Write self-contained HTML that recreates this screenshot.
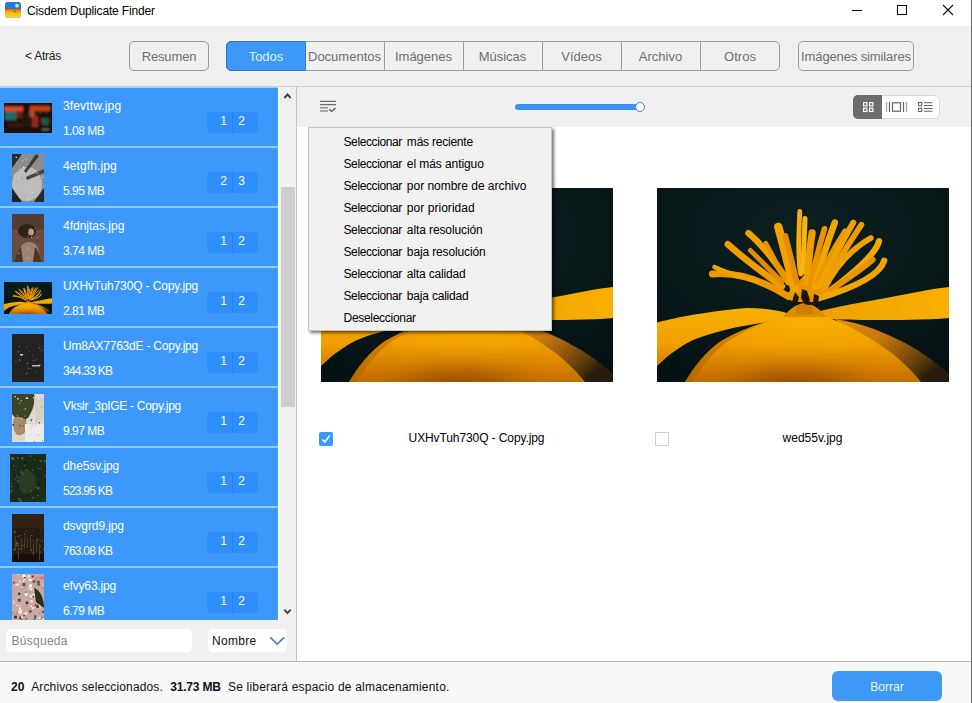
<!DOCTYPE html>
<html lang="es">
<head>
<meta charset="utf-8">
<title>Cisdem Duplicate Finder</title>
<style>
*{box-sizing:border-box;margin:0;padding:0}
html,body{width:972px;height:703px;overflow:hidden;background:#fff}
body{font-family:"Liberation Sans",Arial,sans-serif;font-size:12px;color:#000;position:relative}
.abs{position:absolute}
#titlebar{left:0;top:0;width:972px;height:26px;background:#fff}
#title{left:27px;top:3px;letter-spacing:-.15px;font-size:12px;line-height:16px;color:#000;white-space:nowrap}
#topbar{left:0;top:26px;width:972px;height:61px;background:#f0f0f0;border-bottom:1px solid #cfcfcf}
.btn{position:absolute;top:41px;height:30px;border:1px solid #9a9a9a;border-radius:5px;color:#6e6e6e;font-size:13px;line-height:30px;text-align:center;white-space:nowrap}
#tabs{left:226px;top:41px;width:554px;height:30px;border:1px solid #9a9a9a;border-radius:5px}
.tab{position:absolute;top:-1px;height:30px;width:80px;border:1px solid #9a9a9a;border-left:none;color:#6e6e6e;font-size:13px;line-height:30px;text-align:center;white-space:nowrap}
.tab.sel{background:#3d98f6;color:#dcf6ff;border:1px solid #2c76c6;border-radius:5px 0 0 5px}
#left{left:0;top:87px;width:278px;height:533px;background:#3c99fb;border-top:1px solid #a6d2fa;overflow:hidden}
.item{position:absolute;left:0;width:278px;height:60px;border-bottom:2px solid #8fcbff}
.item .nm{position:absolute;left:63px;top:10px;color:#fff;font-size:12px;line-height:16px;white-space:nowrap}
.item .sz{position:absolute;left:63px;top:35px;color:#fff;font-size:12px;line-height:16px;white-space:nowrap}
.badge{position:absolute;left:207px;top:23.5px;width:51px;height:21px;background:#2e8ffa;border-radius:4px;color:#fff;font-size:12px;line-height:19.5px}
.badge:before{content:"";position:absolute;left:25px;top:0;width:1px;height:21px;background:#2483ee}
.badge span{position:absolute;top:0;width:17px;text-align:center}
.th{position:absolute;overflow:hidden}
#scroll{left:278px;top:87px;width:18px;height:533px;background:#f0f0f0;border-left:2px solid #fbfbfb}
#thumb{left:281px;top:187px;width:14px;height:220px;background:#cdcdcd}
#vline{left:296px;top:87px;width:1px;height:574px;background:#c6c6c6}
#leftbottom{left:0;top:620px;width:296px;height:41px;background:#f0f0f0}
#search{left:6px;top:629px;width:186px;height:23px;background:#fff;border-radius:5px;color:#858585;font-size:12px;letter-spacing:.27px;line-height:25px;padding-left:5.5px}
#sort{left:208px;top:629px;width:79px;height:23px;background:#fff;border-radius:5px;color:#111;font-size:12px;letter-spacing:.3px;line-height:25px;padding-left:4px}
#rtool{left:297px;top:87px;width:675px;height:40px;background:#f0f0f0}
#content{left:299px;top:127px;width:673px;height:534px;background:#fff}
#footer{left:0;top:661px;width:972px;height:42px;background:#f8f8f8;border-top:1px solid #b9b9b9}
#ftxt{left:11px;top:679px;font-size:12px;line-height:16px;white-space:nowrap;color:#111}
#ftxt span,#ftxt b{position:absolute;top:0;left:0}
#ftxt span{letter-spacing:.13px}
#borrar{left:832px;top:671px;width:110px;height:30px;background:#3d98f6;border-radius:6px;color:#e4f8ff;font-size:12px;line-height:32px;text-align:center}
#menu{left:308px;top:127px;width:244px;height:204px;background:#f1f1f1;border:1px solid #c4c4c4;box-shadow:2px 2px 3px rgba(0,0,0,.55)}
#menu div{position:absolute;left:34.5px;word-spacing:1.6px;font-size:12px;line-height:16px;white-space:nowrap;color:#000}
#menu .sel{letter-spacing:-.39px}
#menu span{word-spacing:0}
.lbl{position:absolute;top:430px;font-size:12px;line-height:16px;text-align:center;white-space:nowrap}
#redge{left:971px;top:0;width:1px;height:703px;background:#6a6a6a}
</style>
</head>
<body>
<svg width="0" height="0" style="position:absolute"><defs>
<radialGradient id="fbg" cx=".5" cy=".25" r=".8"><stop offset="0" stop-color="#0b2020"/><stop offset="1" stop-color="#051214"/></radialGradient>
<radialGradient id="fdome" cx=".5" cy=".12" r=".95" fx=".5" fy=".05"><stop offset="0" stop-color="#f8b200"/><stop offset=".45" stop-color="#f2a000"/><stop offset=".8" stop-color="#dc8400"/><stop offset="1" stop-color="#c87200"/></radialGradient>
<radialGradient id="fshade" cx=".45" cy="1.05" r=".62"><stop offset="0" stop-color="#8a4400" stop-opacity=".9"/><stop offset=".35" stop-color="#a05400" stop-opacity=".6"/><stop offset=".7" stop-color="#b86800" stop-opacity=".22"/><stop offset="1" stop-color="#c07000" stop-opacity="0"/></radialGradient>
<linearGradient id="fleft" x1="0" y1="0" x2="0" y2="1"><stop offset="0" stop-color="#f8b000"/><stop offset=".6" stop-color="#f0a000"/><stop offset="1" stop-color="#d88000"/></linearGradient>
<linearGradient id="fright" x1="0" y1="0" x2="1" y2="0"><stop offset="0" stop-color="#f0a000"/><stop offset="1" stop-color="#f8b000"/></linearGradient>
<linearGradient id="funder" x1="0" y1="0" x2="1" y2=".6"><stop offset="0" stop-color="#e89000"/><stop offset=".45" stop-color="#c07410"/><stop offset=".8" stop-color="#6a4410"/><stop offset="1" stop-color="#2a1c0c"/></linearGradient>
<linearGradient id="funderl" x1="1" y1="0" x2="0" y2="1"><stop offset="0" stop-color="#e89400"/><stop offset="1" stop-color="#b86800"/></linearGradient>
<filter id="fb1" x="-5%" y="-5%" width="110%" height="110%"><feGaussianBlur stdDeviation=".6"/></filter>
<symbol id="flower" viewBox="0 0 292 194" preserveAspectRatio="none">
<rect width="292" height="194" fill="url(#fbg)"/>
<g filter="url(#fb1)">
<path d="M178 131C215 136 262 158 292 186V194H250Z" fill="url(#funder)"/>
<path d="M0 134.6C20 129 54 123 90 120C105 120 120 122 130 125L130 132C100 134 60 142 36 152C20 160 8 170 0 178Z" fill="url(#fleft)"/>
<path d="M28 194C36 180 48 164 64 153C84 141 108 133 128 129L135 135L60 194Z" fill="url(#funderl)"/>
<path d="M160 124C180 118 215 113 255 105C270 102 282 100 292 99V130C270 132 240 132 210 132C195 132 175 131 160 131Z" fill="url(#fright)"/>
<path d="M36 194C44 180 56 164 70 154C90 141 112 131 130 128C140 125 155 125 165 128C185 133 212 148 236 166C248 176 258 186 264 194Z" fill="url(#fdome)"/>
<path d="M36 194C44 180 56 164 70 154C90 141 112 131 130 128C140 125 155 125 165 128C185 133 212 148 236 166C248 176 258 186 264 194Z" fill="url(#fshade)"/>
<path d="M126 129C132 122 138 116 148 115C157 116 163 122 170 129Z" fill="#e08c00"/><path d="M128 108L150 84L168 106L160 114L136 114Z" fill="#e89400"/>
<g fill="none" stroke-linecap="round"><path d="M131.5 108.7Q90.6 82.7 55.3 86" stroke="#ee9600" stroke-width="6.9"/><path d="M100 93Q71.3 86.0 57.4 79" stroke="#f2a200" stroke-width="4.5"/><path d="M125 98.4Q90.9 74.3 70.8 56.2" stroke="#f09c00" stroke-width="6.6"/><path d="M125 94Q106.8 75.8 93.4 62.4" stroke="#e48c00" stroke-width="4.8"/><path d="M131.5 94.3Q110.5 61.3 91.4 45" stroke="#f2a000" stroke-width="6.3"/><path d="M127 90Q118.1 71.4 108.8 55.2" stroke="#e89200" stroke-width="4.5"/><path d="M137.7 102.5Q129.4 68.6 121.2 38.7" stroke="#f4a200" stroke-width="8.4"/><path d="M139.7 94.3Q133.9 68.8 128.4 48" stroke="#e68e00" stroke-width="5.7"/><path d="M143.8 86Q140.3 72.2 142.8 23.3" stroke="#f6ae10" stroke-width="4.8"/><path d="M145.9 84Q147.1 54.8 148 30.5" stroke="#f8b418" stroke-width="5.1"/><path d="M150 94.3Q151.4 70.4 155.1 44.9" stroke="#f09e00" stroke-width="7.2"/><path d="M154 94Q159.2 68.6 167.5 40.8" stroke="#ea9400" stroke-width="5.7"/><path d="M158 98Q166.1 65.7 177.8 34.6" stroke="#f4a600" stroke-width="6.6"/><path d="M160 94Q172.0 67.5 188 42.9" stroke="#ec9800" stroke-width="5.1"/><path d="M162.3 98.4Q178.7 65.5 196.3 34.6" stroke="#f2a200" stroke-width="6.0"/><path d="M166.5 98.4Q184.5 66.4 204.5 36.7" stroke="#ee9c00" stroke-width="5.7"/><path d="M166.5 102.5Q183.8 67.2 213.8 50" stroke="#f0a000" stroke-width="5.7"/><path d="M170.6 104.6Q218.9 68.5 222 53.2" stroke="#f4a800" stroke-width="6.3"/><path d="M166.5 106.7Q203.5 82.8 215.8 71.7" stroke="#e89400" stroke-width="5.7"/><path d="M160.3 110.8Q221.4 92.7 227.2 72.7" stroke="#f2a400" stroke-width="6.3"/></g>
<path d="M138 104l4 5l-2 8l-5 -3zM145 101l5 2l3 9l-5 5l-4 -7zM157 106l5 2l-1 9l-5 -2zM150 112l4 2l-1 5l-4 -1z" fill="#1c1408"/>
<path d="M140 118c3 -2 11 -2 15 0l2 8h-19z" fill="#d07e00"/>
</g>
</symbol></defs></svg><svg width="0" height="0" style="position:absolute"><defs><filter id="tb" x="0" y="0" width="100%" height="100%"><feGaussianBlur stdDeviation=".6"/></filter><filter id="tb2" x="0" y="0" width="100%" height="100%"><feGaussianBlur stdDeviation="1.1"/></filter></defs></svg>
<div id="titlebar" class="abs"></div>
<div id="title" class="abs">Cisdem Duplicate Finder</div>
<div id="topbar" class="abs"></div>
<div id="back" class="abs" style="left:25px;top:48px;font-size:12px;line-height:16px;color:#222;letter-spacing:-.25px">&lt; Atrás</div>
<div class="btn" style="left:129px;width:80px;letter-spacing:-.15px">Resumen</div>
<div id="tabs" class="abs">
<div class="tab sel" style="left:-1px">Todos</div>
<div class="tab" style="left:78px">Documentos</div>
<div class="tab" style="left:157px">Imágenes</div>
<div class="tab" style="left:236px">Músicas</div>
<div class="tab" style="left:315px">Vídeos</div>
<div class="tab" style="left:394px">Archivo</div>
<div class="tab" style="left:473px;border-right:none;border-top:none;border-bottom:none;top:0;height:28px;line-height:30px">Otros</div>
</div>
<div class="btn" style="left:798px;width:116px;letter-spacing:-.12px">Imágenes similares</div>

<div id="left" class="abs">
<div class="item" style="top:0px"><div class="th" style="left:4px;top:15px;width:48px;height:30px"><svg width="48" height="30" viewBox="0 0 48 30" style="display:block;background:#1a0d0a"><g filter="url(#tb2)"><rect width="48" height="30" fill="#1a0d0a"/><rect x="0" y="3.5" width="19" height="5" fill="#d8502a"/><rect x="26" y="3" width="20" height="5" fill="#c8401e"/><rect x="1" y="9" width="11" height="8" fill="#1c6e66"/><rect x="12" y="9" width="7" height="6" fill="#6a2216"/><rect x="28" y="13" width="6" height="11" fill="#9a281c"/><rect x="25" y="8" width="5" height="6" fill="#b84a30"/><rect x="38" y="15" width="7" height="7" fill="#24553a"/><rect x="4" y="20" width="14" height="4" fill="#3a1610"/><rect x="18" y="10" width="8" height="14" fill="#22120c"/><rect x="38" y="26" width="7" height="1" fill="#7a8a5a"/><rect x="31.1" y="10.4" width="0.8" height="0.8" fill="#f0a070"/><rect x="42.1" y="9.5" width="0.8" height="0.8" fill="#f0a070"/><rect x="24.8" y="14.9" width="0.5" height="0.5" fill="#f0a070"/><rect x="36.1" y="8.9" width="0.8" height="0.8" fill="#f0a070"/><rect x="37.9" y="17.3" width="0.5" height="0.5" fill="#e8d0a0"/><rect x="25.1" y="11.5" width="0.8" height="0.8" fill="#f0a070"/><rect x="30.4" y="10.3" width="0.6" height="0.6" fill="#e8d0a0"/><rect x="36.3" y="18.9" width="0.6" height="0.6" fill="#f0a070"/><rect x="32.2" y="16.8" width="0.5" height="0.5" fill="#f0a070"/><rect x="37.6" y="15.9" width="0.8" height="0.8" fill="#e8d0a0"/></g></svg></div><div class="nm" style="letter-spacing:0.14px">3fevttw.jpg</div><div class="sz" style="letter-spacing:-0.5px">1.08 MB</div><div class="badge"><span style="left:8px">1</span><span style="left:26px">2</span></div></div>
<div class="item" style="top:60px"><div class="th" style="left:12px;top:6px;width:32px;height:48px"><svg width="32" height="48" viewBox="0 0 32 48" style="display:block;background:#8c8c8a"><g filter="url(#tb)"><rect width="32" height="48" fill="#8c8c8a"/><ellipse cx="15" cy="30" rx="15" ry="17" fill="#bcbcba"/><path d="M0 0h10L0 14z" fill="#2c2c2c"/><path d="M0 34L10 48H0z" fill="#242424"/><path d="M32 34L22 48h10z" fill="#2a2a2a"/><path d="M24 0L12 17l2 2L27 2z" fill="#3a3a3a"/><path d="M32 15L14 23l1 3l17 -7z" fill="#444"/><rect x="14.9" y="44.3" width="0.9" height="0.9" fill="#eee"/><rect x="25.4" y="33.6" width="0.8" height="0.8" fill="#bbb"/><rect x="9.6" y="23.8" width="0.9" height="0.9" fill="#777"/><rect x="9.2" y="47.0" width="0.7" height="0.7" fill="#777"/><rect x="5.3" y="16.4" width="1.3" height="1.3" fill="#777"/><rect x="1.3" y="32.1" width="1.2" height="1.2" fill="#bbb"/><rect x="25.3" y="39.3" width="0.9" height="0.9" fill="#777"/><rect x="19.0" y="27.8" width="1.0" height="1.0" fill="#eee"/><rect x="30.2" y="22.8" width="1.1" height="1.1" fill="#eee"/><rect x="23.4" y="14.9" width="1.1" height="1.1" fill="#bbb"/><rect x="26.3" y="13.7" width="0.9" height="0.9" fill="#bbb"/><rect x="11.1" y="45.2" width="0.9" height="0.9" fill="#bbb"/><rect x="3.7" y="2.8" width="1.2" height="1.2" fill="#eee"/><rect x="23.6" y="19.1" width="1.3" height="1.3" fill="#777"/><rect x="2.6" y="21.6" width="1.0" height="1.0" fill="#eee"/><rect x="26.2" y="41.5" width="0.8" height="0.8" fill="#777"/><rect x="31.6" y="32.8" width="0.9" height="0.9" fill="#eee"/><rect x="4.8" y="8.5" width="0.8" height="0.8" fill="#eee"/><rect x="0.4" y="39.9" width="0.7" height="0.7" fill="#777"/><rect x="0.1" y="20.1" width="0.9" height="0.9" fill="#bbb"/><rect x="10.2" y="6.0" width="1.3" height="1.3" fill="#bbb"/><rect x="21.0" y="35.5" width="1.0" height="1.0" fill="#bbb"/><rect x="25.5" y="18.8" width="0.9" height="0.9" fill="#eee"/><rect x="15.4" y="19.2" width="0.8" height="0.8" fill="#eee"/><rect x="14.1" y="5.3" width="1.1" height="1.1" fill="#eee"/><rect x="0.0" y="7.3" width="0.7" height="0.7" fill="#777"/><rect x="19.6" y="3.4" width="0.8" height="0.8" fill="#777"/><rect x="4.8" y="12.1" width="0.9" height="0.9" fill="#777"/><rect x="15.2" y="5.5" width="1.0" height="1.0" fill="#777"/><rect x="15.4" y="15.0" width="0.7" height="0.7" fill="#bbb"/><rect x="11.0" y="12.7" width="1.3" height="1.3" fill="#eee"/><rect x="16.5" y="9.9" width="1.4" height="1.4" fill="#777"/><rect x="4.7" y="26.1" width="0.6" height="0.6" fill="#bbb"/><rect x="9.5" y="30.9" width="0.7" height="0.7" fill="#777"/><rect x="16.6" y="43.6" width="0.9" height="0.9" fill="#eee"/><rect x="17.0" y="37.4" width="0.9" height="0.9" fill="#eee"/><rect x="19.6" y="37.8" width="1.2" height="1.2" fill="#eee"/><rect x="25.8" y="39.3" width="1.2" height="1.2" fill="#eee"/><rect x="6.4" y="23.7" width="1.2" height="1.2" fill="#eee"/><rect x="25.3" y="22.7" width="0.8" height="0.8" fill="#bbb"/></g></svg></div><div class="nm" style="letter-spacing:0.1px">4etgfh.jpg</div><div class="sz" style="letter-spacing:-0.5px">5.95 MB</div><div class="badge"><span style="left:8px">2</span><span style="left:26px">3</span></div></div>
<div class="item" style="top:120px"><div class="th" style="left:12px;top:6px;width:32px;height:48px"><svg width="32" height="48" viewBox="0 0 32 48" style="display:block;background:#6a4c3c"><g filter="url(#tb)"><rect width="32" height="48" fill="#6a4c3c"/><rect width="32" height="16" fill="#553c30"/><ellipse cx="15" cy="17" rx="9" ry="7" fill="#2e2019"/><ellipse cx="19" cy="18" rx="3" ry="3.5" fill="#b89a88"/><path d="M6 48c0 -14 4 -20 11 -20s11 6 11 20z" fill="#9c8272"/><path d="M3 48c1 -8 3 -12 6 -15l2 15zM29 48c-1 -8 -3 -12 -6 -15l-2 15z" fill="#4a3429"/><rect x="25.1" y="26.1" width="1.3" height="1.3" fill="#3a2a22"/><rect x="25.1" y="23.1" width="0.8" height="0.8" fill="#d8c4b8"/><rect x="15.4" y="22.2" width="0.9" height="0.9" fill="#d8c4b8"/><rect x="15.6" y="33.5" width="1.2" height="1.2" fill="#d8c4b8"/><rect x="22.7" y="14.3" width="0.9" height="0.9" fill="#d8c4b8"/><rect x="15.6" y="16.4" width="1.2" height="1.2" fill="#3a2a22"/><rect x="7.7" y="44.1" width="1.1" height="1.1" fill="#3a2a22"/><rect x="14.0" y="44.1" width="1.1" height="1.1" fill="#d8c4b8"/><rect x="25.9" y="11.0" width="1.0" height="1.0" fill="#3a2a22"/><rect x="22.1" y="15.3" width="1.2" height="1.2" fill="#3a2a22"/><rect x="19.1" y="22.6" width="1.0" height="1.0" fill="#d8c4b8"/><rect x="6.4" y="38.8" width="1.1" height="1.1" fill="#d8c4b8"/><rect x="16.5" y="43.6" width="0.9" height="0.9" fill="#d8c4b8"/><rect x="22.5" y="17.6" width="0.8" height="0.8" fill="#3a2a22"/></g></svg></div><div class="nm" style="letter-spacing:0px">4fdnjtas.jpg</div><div class="sz" style="letter-spacing:-0.5px">3.74 MB</div><div class="badge"><span style="left:8px">1</span><span style="left:26px">2</span></div></div>
<div class="item" style="top:180px"><div class="th" style="left:4px;top:14px;width:48px;height:32px"><svg width="48" height="32" style="display:block"><use href="#flower" width="48" height="32"/></svg></div><div class="nm" style="letter-spacing:-0.14px">UXHvTuh730Q - Copy.jpg</div><div class="sz" style="letter-spacing:-0.5px">2.81 MB</div><div class="badge"><span style="left:8px">1</span><span style="left:26px">2</span></div></div>
<div class="item" style="top:240px"><div class="th" style="left:12px;top:6px;width:32px;height:48px"><svg width="32" height="48" viewBox="0 0 32 48" style="display:block;background:#202324"><g filter="url(#tb)"><rect width="32" height="48" fill="#202324"/><rect x="16.5" y="34.0" width="0.8" height="0.8" fill="#c8cac8"/><rect x="14.3" y="12.5" width="1.2" height="1.2" fill="#5a5d5c"/><rect x="27.2" y="30.5" width="1.2" height="1.2" fill="#c8cac8"/><rect x="14.4" y="39.2" width="0.9" height="0.9" fill="#c8cac8"/><rect x="7.1" y="25.4" width="1.2" height="1.2" fill="#8a8d8c"/><rect x="19.4" y="34.4" width="0.6" height="0.6" fill="#8a8d8c"/><rect x="15.8" y="32.7" width="0.9" height="0.9" fill="#5a5d5c"/><rect x="21.4" y="26.0" width="0.9" height="0.9" fill="#8a8d8c"/><rect x="26.8" y="9.9" width="0.7" height="0.7" fill="#8a8d8c"/><rect x="23.9" y="25.3" width="0.9" height="0.9" fill="#8a8d8c"/><rect x="15.0" y="28.8" width="0.9" height="0.9" fill="#c8cac8"/><rect x="8.4" y="17.4" width="0.9" height="0.9" fill="#5a5d5c"/><rect x="16.7" y="16.4" width="0.9" height="0.9" fill="#5a5d5c"/><rect x="27.9" y="38.4" width="0.7" height="0.7" fill="#5a5d5c"/><rect x="6.7" y="12.1" width="0.9" height="0.9" fill="#8a8d8c"/><rect x="21.1" y="22.6" width="0.7" height="0.7" fill="#5a5d5c"/><rect x="24.2" y="38.5" width="0.6" height="0.6" fill="#c8cac8"/><rect x="20.4" y="20.5" width="0.7" height="0.7" fill="#8a8d8c"/><rect x="29.1" y="15.5" width="1.3" height="1.3" fill="#5a5d5c"/><rect x="26.9" y="13.5" width="1.0" height="1.0" fill="#8a8d8c"/><rect x="7.4" y="22.7" width="0.9" height="0.9" fill="#5a5d5c"/><rect x="14.4" y="20.1" width="0.6" height="0.6" fill="#5a5d5c"/><rect x="3.5" y="26.8" width="0.9" height="0.9" fill="#8a8d8c"/><rect x="13.4" y="25.6" width="0.7" height="0.7" fill="#8a8d8c"/><rect x="6.0" y="39.2" width="0.7" height="0.7" fill="#8a8d8c"/><rect x="5.3" y="17.2" width="1.2" height="1.2" fill="#8a8d8c"/><rect x="20" y="31" width="8" height="1.5" fill="#b8bab8"/><rect x="8" y="20" width="3" height="1.5" fill="#d0d2d0"/></g></svg></div><div class="nm" style="letter-spacing:-0.22px">Um8AX7763dE - Copy.jpg</div><div class="sz" style="letter-spacing:-0.77px">344.33 KB</div><div class="badge"><span style="left:8px">1</span><span style="left:26px">2</span></div></div>
<div class="item" style="top:300px"><div class="th" style="left:12px;top:6px;width:32px;height:48px"><svg width="32" height="48" viewBox="0 0 32 48" style="display:block;background:#dcd8cc"><g filter="url(#tb)"><rect width="32" height="48" fill="#dcd8cc"/><path d="M0 0h22c2 8 -2 18 -6 24c-6 4 -12 2 -16 -4z" fill="#3a4428"/><path d="M2 24c6 -3 12 0 13 8c0 6 -4 10 -10 9c-4 -4 -5 -12 -3 -17z" fill="#a98a6a"/><path d="M13 30h19v18H13z" fill="#ecebea"/><path d="M22 4h10v22H24z" fill="#d6d0c0"/><rect x="8.7" y="6.2" width="1.0" height="1.0" fill="#fff"/><rect x="13.0" y="25.8" width="1.1" height="1.1" fill="#23301a"/><rect x="22.4" y="4.3" width="0.7" height="0.7" fill="#56633a"/><rect x="13.6" y="3.5" width="1.5" height="1.5" fill="#e8e6da"/><rect x="25.7" y="4.0" width="1.5" height="1.5" fill="#e8e6da"/><rect x="8.5" y="5.8" width="0.6" height="0.6" fill="#23301a"/><rect x="29.7" y="12.9" width="0.7" height="0.7" fill="#56633a"/><rect x="30.0" y="46.5" width="0.9" height="0.9" fill="#56633a"/><rect x="6.5" y="15.0" width="0.9" height="0.9" fill="#56633a"/><rect x="9.3" y="24.0" width="0.8" height="0.8" fill="#fff"/><rect x="25.7" y="47.7" width="0.6" height="0.6" fill="#e8e6da"/><rect x="23.5" y="26.5" width="0.8" height="0.8" fill="#23301a"/><rect x="7.9" y="21.5" width="1.3" height="1.3" fill="#23301a"/><rect x="21.0" y="26.2" width="1.5" height="1.5" fill="#fff"/><rect x="22.0" y="47.2" width="0.9" height="0.9" fill="#56633a"/><rect x="13.0" y="16.7" width="0.7" height="0.7" fill="#56633a"/><rect x="0.5" y="30.0" width="1.5" height="1.5" fill="#23301a"/><rect x="5.2" y="4.1" width="1.4" height="1.4" fill="#fff"/><rect x="19.2" y="33.2" width="0.6" height="0.6" fill="#56633a"/><rect x="5.0" y="21.4" width="0.9" height="0.9" fill="#fff"/><rect x="31.1" y="26.3" width="0.8" height="0.8" fill="#fff"/><rect x="7.0" y="8.8" width="0.9" height="0.9" fill="#e8e6da"/><rect x="15.2" y="24.1" width="0.8" height="0.8" fill="#e8e6da"/><rect x="2.9" y="39.2" width="0.7" height="0.7" fill="#e8e6da"/><rect x="12.6" y="14.4" width="1.2" height="1.2" fill="#e8e6da"/><rect x="18.7" y="25.4" width="1.4" height="1.4" fill="#23301a"/><rect x="24.5" y="34.6" width="1.1" height="1.1" fill="#fff"/><rect x="23.2" y="30.9" width="0.6" height="0.6" fill="#23301a"/><rect x="23.5" y="39.0" width="0.7" height="0.7" fill="#e8e6da"/><rect x="26.4" y="28.0" width="1.5" height="1.5" fill="#56633a"/><rect x="2.7" y="2.0" width="1.2" height="1.2" fill="#e8e6da"/><rect x="12.1" y="21.7" width="0.7" height="0.7" fill="#e8e6da"/><rect x="20.0" y="32.7" width="1.1" height="1.1" fill="#e8e6da"/><rect x="14.6" y="3.4" width="1.5" height="1.5" fill="#e8e6da"/><rect x="21.1" y="3.2" width="1.3" height="1.3" fill="#fff"/><rect x="25.9" y="40.6" width="0.8" height="0.8" fill="#56633a"/><rect x="7.4" y="31.2" width="1.1" height="1.1" fill="#23301a"/><rect x="2.5" y="43.7" width="0.9" height="0.9" fill="#e8e6da"/><rect x="19.7" y="30.9" width="0.7" height="0.7" fill="#56633a"/><rect x="10.6" y="31.3" width="1.3" height="1.3" fill="#56633a"/></g></svg></div><div class="nm" style="letter-spacing:-0.3px">Vkslr_3pIGE - Copy.jpg</div><div class="sz" style="letter-spacing:-0.5px">9.97 MB</div><div class="badge"><span style="left:8px">1</span><span style="left:26px">2</span></div></div>
<div class="item" style="top:360px"><div class="th" style="left:10px;top:6px;width:36px;height:48px"><svg width="36" height="48" viewBox="0 0 36 48" style="display:block;background:#1a2a1c"><g filter="url(#tb)"><rect width="36" height="48" fill="#1a2a1c"/><rect x="0.4" y="2.9" width="1.2" height="1.2" fill="#3a5a32"/><rect x="24.9" y="32.4" width="1.2" height="1.2" fill="#4f7440"/><rect x="16.7" y="22.4" width="1.0" height="1.0" fill="#2a4226"/><rect x="11.2" y="4.1" width="1.5" height="1.5" fill="#4f7440"/><rect x="16.5" y="39.4" width="2.2" height="2.2" fill="#121a12"/><rect x="35.8" y="18.6" width="2.1" height="2.1" fill="#2a4226"/><rect x="2.7" y="4.3" width="1.8" height="1.8" fill="#4f7440"/><rect x="34.3" y="6.4" width="1.9" height="1.9" fill="#4f7440"/><rect x="31.9" y="33.8" width="1.1" height="1.1" fill="#121a12"/><rect x="14.2" y="7.6" width="2.1" height="2.1" fill="#121a12"/><rect x="14.6" y="34.9" width="1.4" height="1.4" fill="#121a12"/><rect x="11.4" y="40.3" width="0.8" height="0.8" fill="#4f7440"/><rect x="30.2" y="5.8" width="2.1" height="2.1" fill="#3a5a32"/><rect x="32.5" y="13.9" width="1.3" height="1.3" fill="#121a12"/><rect x="14.0" y="41.8" width="0.9" height="0.9" fill="#121a12"/><rect x="27.2" y="41.0" width="1.2" height="1.2" fill="#3a5a32"/><rect x="30.0" y="13.7" width="2.1" height="2.1" fill="#2a4226"/><rect x="35.0" y="20.9" width="1.2" height="1.2" fill="#4f7440"/><rect x="28.3" y="20.5" width="0.8" height="0.8" fill="#121a12"/><rect x="32.9" y="45.2" width="1.6" height="1.6" fill="#3a5a32"/><rect x="1.8" y="35.2" width="1.4" height="1.4" fill="#2a4226"/><rect x="23.2" y="13.7" width="0.9" height="0.9" fill="#2a4226"/><rect x="6.1" y="19.9" width="1.2" height="1.2" fill="#4f7440"/><rect x="26.6" y="46.9" width="1.2" height="1.2" fill="#2a4226"/><rect x="10.8" y="26.8" width="1.4" height="1.4" fill="#2a4226"/><rect x="23.2" y="3.6" width="1.5" height="1.5" fill="#121a12"/><rect x="19.8" y="21.7" width="1.3" height="1.3" fill="#121a12"/><rect x="15.4" y="26.3" width="1.1" height="1.1" fill="#2a4226"/><rect x="12.3" y="4.4" width="1.1" height="1.1" fill="#4f7440"/><rect x="29.1" y="9.7" width="0.8" height="0.8" fill="#121a12"/><rect x="13.8" y="35.8" width="1.1" height="1.1" fill="#4f7440"/><rect x="12.2" y="3.0" width="1.2" height="1.2" fill="#4f7440"/><rect x="4.5" y="24.2" width="1.7" height="1.7" fill="#2a4226"/><rect x="3.3" y="43.0" width="1.3" height="1.3" fill="#121a12"/><rect x="15.5" y="15.0" width="1.9" height="1.9" fill="#3a5a32"/><rect x="4.6" y="20.4" width="1.9" height="1.9" fill="#121a12"/><rect x="34.9" y="23.5" width="0.9" height="0.9" fill="#121a12"/><rect x="35.0" y="11.9" width="1.0" height="1.0" fill="#2a4226"/><rect x="5.5" y="46.7" width="1.0" height="1.0" fill="#121a12"/><rect x="3.1" y="37.3" width="0.8" height="0.8" fill="#2a4226"/><rect x="8.4" y="44.2" width="1.7" height="1.7" fill="#4f7440"/><rect x="34.6" y="30.1" width="1.5" height="1.5" fill="#121a12"/><rect x="25.1" y="5.4" width="0.9" height="0.9" fill="#2a4226"/><rect x="14.0" y="10.7" width="1.6" height="1.6" fill="#3a5a32"/><rect x="19.3" y="47.8" width="1.2" height="1.2" fill="#4f7440"/><rect x="23.2" y="42.4" width="1.5" height="1.5" fill="#2a4226"/><rect x="19.7" y="1.4" width="1.4" height="1.4" fill="#4f7440"/><rect x="2.0" y="9.3" width="2.0" height="2.0" fill="#121a12"/><rect x="2.9" y="10.9" width="1.4" height="1.4" fill="#4f7440"/><rect x="8.2" y="1.6" width="1.3" height="1.3" fill="#121a12"/><rect x="13.0" y="19.0" width="0.8" height="0.8" fill="#4f7440"/><rect x="26.6" y="24.2" width="1.1" height="1.1" fill="#2a4226"/><rect x="11.2" y="39.4" width="1.1" height="1.1" fill="#2a4226"/><rect x="9.5" y="42.7" width="1.0" height="1.0" fill="#121a12"/><rect x="22.0" y="43.0" width="1.5" height="1.5" fill="#3a5a32"/><rect x="34.2" y="7.0" width="1.4" height="1.4" fill="#2a4226"/><rect x="0.9" y="28.6" width="1.4" height="1.4" fill="#3a5a32"/><rect x="6.6" y="21.6" width="1.8" height="1.8" fill="#4f7440"/><rect x="26.4" y="47.9" width="2.1" height="2.1" fill="#4f7440"/><rect x="6.9" y="31.3" width="1.5" height="1.5" fill="#121a12"/><rect x="1.1" y="31.9" width="1.3" height="1.3" fill="#4f7440"/><rect x="35.5" y="21.2" width="1.0" height="1.0" fill="#3a5a32"/><rect x="10.1" y="16.9" width="2.1" height="2.1" fill="#3a5a32"/><rect x="20.2" y="36.4" width="1.3" height="1.3" fill="#4f7440"/><rect x="29.6" y="20.8" width="0.9" height="0.9" fill="#121a12"/><rect x="7.0" y="26.0" width="1.4" height="1.4" fill="#4f7440"/><rect x="13.1" y="43.1" width="0.8" height="0.8" fill="#121a12"/><rect x="8.9" y="30.0" width="1.4" height="1.4" fill="#121a12"/><rect x="1.3" y="3.0" width="2.1" height="2.1" fill="#4f7440"/><rect x="7.0" y="3.0" width="1.6" height="1.6" fill="#4f7440"/><rect x="9.8" y="46.0" width="1.7" height="1.7" fill="#4f7440"/><rect x="26.9" y="33.1" width="2.1" height="2.1" fill="#4f7440"/><rect x="0.1" y="36.3" width="2.1" height="2.1" fill="#3a5a32"/><rect x="0.9" y="11.2" width="1.5" height="1.5" fill="#121a12"/><rect x="34.3" y="18.6" width="1.2" height="1.2" fill="#121a12"/><rect x="29.3" y="6.4" width="1.5" height="1.5" fill="#3a5a32"/><rect x="28.9" y="35.4" width="2.0" height="2.0" fill="#2a4226"/><rect x="21.9" y="15.7" width="1.2" height="1.2" fill="#4f7440"/><rect x="28.2" y="28.6" width="1.5" height="1.5" fill="#121a12"/><rect x="27.1" y="11.9" width="0.9" height="0.9" fill="#3a5a32"/><rect x="17.3" y="26.1" width="1.0" height="1.0" fill="#121a12"/><rect x="31.8" y="47.4" width="1.2" height="1.2" fill="#3a5a32"/><rect x="7.5" y="20.2" width="2.2" height="2.2" fill="#121a12"/><rect x="6.2" y="6.4" width="1.4" height="1.4" fill="#2a4226"/><rect x="26.9" y="40.7" width="1.7" height="1.7" fill="#3a5a32"/><rect x="28.1" y="14.1" width="1.2" height="1.2" fill="#4f7440"/><rect x="13.4" y="35.4" width="1.1" height="1.1" fill="#2a4226"/><rect x="6.7" y="11.3" width="1.2" height="1.2" fill="#2a4226"/><rect x="11.7" y="19.0" width="2.2" height="2.2" fill="#2a4226"/><rect x="23.4" y="4.8" width="1.4" height="1.4" fill="#3a5a32"/><ellipse cx="17" cy="28" rx="9" ry="12" fill="#456a38" opacity=".3"/></g></svg></div><div class="nm" style="letter-spacing:-0.1px">dhe5sv.jpg</div><div class="sz" style="letter-spacing:-0.75px">523.95 KB</div><div class="badge"><span style="left:8px">1</span><span style="left:26px">2</span></div></div>
<div class="item" style="top:420px"><div class="th" style="left:12px;top:6px;width:32px;height:48px"><svg width="32" height="48" viewBox="0 0 32 48" style="display:block;background:#261a12"><g filter="url(#tb)"><rect width="32" height="48" fill="#261a12"/><rect width="32" height="14" fill="#322217"/><rect y="40" width="32" height="8" fill="#17100a"/><rect x="4.1" y="27.3" width="1.1" height="1.1" fill="#4a3220"/><rect x="28.4" y="15.1" width="0.7" height="0.7" fill="#a8844e"/><rect x="2.5" y="30.8" width="1.1" height="1.1" fill="#7a5834"/><rect x="28.9" y="24.4" width="1.1" height="1.1" fill="#4a3220"/><rect x="19.1" y="35.7" width="1.0" height="1.0" fill="#a8844e"/><rect x="4.2" y="30.7" width="0.9" height="0.9" fill="#7a5834"/><rect x="2.1" y="23.5" width="0.5" height="0.5" fill="#d8b87a"/><rect x="2.1" y="34.5" width="1.1" height="1.1" fill="#a8844e"/><rect x="25.6" y="25.5" width="0.8" height="0.8" fill="#d8b87a"/><rect x="3.3" y="14.9" width="0.8" height="0.8" fill="#4a3220"/><rect x="2.9" y="16.8" width="0.8" height="0.8" fill="#7a5834"/><rect x="20.2" y="16.6" width="0.6" height="0.6" fill="#d8b87a"/><rect x="13.3" y="21.9" width="0.7" height="0.7" fill="#a8844e"/><rect x="10.4" y="29.9" width="0.8" height="0.8" fill="#4a3220"/><rect x="1.5" y="35.5" width="1.1" height="1.1" fill="#7a5834"/><rect x="12.7" y="25.3" width="1.2" height="1.2" fill="#4a3220"/><rect x="28.0" y="25.9" width="1.1" height="1.1" fill="#4a3220"/><rect x="18.3" y="24.2" width="1.0" height="1.0" fill="#7a5834"/><rect x="1.4" y="29.4" width="0.9" height="0.9" fill="#4a3220"/><rect x="3.7" y="31.4" width="0.8" height="0.8" fill="#7a5834"/><rect x="5.4" y="21.9" width="0.9" height="0.9" fill="#a8844e"/><rect x="4.3" y="27.7" width="1.1" height="1.1" fill="#7a5834"/><rect x="10.0" y="37.4" width="0.5" height="0.5" fill="#4a3220"/><rect x="10.4" y="31.0" width="0.9" height="0.9" fill="#a8844e"/><rect x="28.1" y="31.4" width="1.1" height="1.1" fill="#7a5834"/><rect x="20.2" y="38.0" width="0.9" height="0.9" fill="#7a5834"/><rect x="25.9" y="19.1" width="0.7" height="0.7" fill="#4a3220"/><rect x="29.2" y="18.4" width="0.8" height="0.8" fill="#7a5834"/><rect x="8.4" y="34.3" width="1.1" height="1.1" fill="#a8844e"/><rect x="27.5" y="37.6" width="1.0" height="1.0" fill="#d8b87a"/><rect x="4.5" y="30.8" width="0.9" height="0.9" fill="#d8b87a"/><rect x="20.5" y="22.6" width="0.7" height="0.7" fill="#4a3220"/><rect x="20.8" y="26.5" width="0.8" height="0.8" fill="#a8844e"/><rect x="1.1" y="41.6" width="0.8" height="0.8" fill="#4a3220"/><rect x="23.9" y="35.8" width="0.8" height="0.8" fill="#7a5834"/><rect x="25.3" y="25.2" width="0.5" height="0.5" fill="#d8b87a"/><rect x="13.9" y="16.6" width="0.8" height="0.8" fill="#a8844e"/><rect x="2.2" y="17.6" width="1.1" height="1.1" fill="#d8b87a"/><rect x="24.3" y="28.3" width="0.5" height="0.5" fill="#4a3220"/><rect x="20.6" y="36.0" width="0.5" height="0.5" fill="#a8844e"/><rect x="30.9" y="34.5" width="1.1" height="1.1" fill="#7a5834"/><rect x="4.9" y="38.8" width="0.7" height="0.7" fill="#7a5834"/><rect x="21.6" y="34.2" width="0.7" height="0.7" fill="#d8b87a"/><rect x="19.3" y="21.1" width="0.7" height="0.7" fill="#d8b87a"/><rect x="28.2" y="26.8" width="0.7" height="0.7" fill="#4a3220"/><rect x="7.2" y="21.4" width="0.9" height="0.9" fill="#d8b87a"/><rect x="12.2" y="19.6" width="0.8" height="0.8" fill="#d8b87a"/><rect x="21.4" y="39.1" width="0.6" height="0.6" fill="#d8b87a"/><rect x="4.5" y="28.9" width="0.9" height="0.9" fill="#d8b87a"/><rect x="30.0" y="26.7" width="0.9" height="0.9" fill="#a8844e"/><rect x="3" y="22.5" width=".8" height="14.3" fill="#5e4428"/><rect x="6" y="28.6" width=".8" height="15.9" fill="#5e4428"/><rect x="9" y="23.7" width=".8" height="13.0" fill="#5e4428"/><rect x="12" y="23.7" width=".8" height="11.2" fill="#5e4428"/><rect x="15" y="23.3" width=".8" height="10.7" fill="#5e4428"/><rect x="18" y="22.3" width=".8" height="14.9" fill="#5e4428"/><rect x="21" y="29.6" width=".8" height="12.4" fill="#5e4428"/><rect x="24" y="25.2" width=".8" height="12.5" fill="#5e4428"/><rect x="27" y="29.7" width=".8" height="17.0" fill="#5e4428"/></g></svg></div><div class="nm" style="letter-spacing:-0.1px">dsvgrd9.jpg</div><div class="sz" style="letter-spacing:-0.75px">763.08 KB</div><div class="badge"><span style="left:8px">1</span><span style="left:26px">2</span></div></div>
<div class="item" style="top:480px"><div class="th" style="left:12px;top:6px;width:32px;height:48px"><svg width="32" height="48" viewBox="0 0 32 48" style="display:block;background:#c8a8a2"><g filter="url(#tb)"><rect width="32" height="48" fill="#c8a8a2"/><rect x="29.7" y="43.0" width="2.5" height="2.5" fill="#4a5a38"/><rect x="1.1" y="7.2" width="2.2" height="2.2" fill="#2e3b28"/><rect x="13.4" y="17.5" width="1.1" height="1.1" fill="#2e3b28"/><rect x="7.3" y="31.3" width="1.0" height="1.0" fill="#fff"/><rect x="18.1" y="14.6" width="2.0" height="2.0" fill="#f4e4e0"/><rect x="7.2" y="28.0" width="2.2" height="2.2" fill="#e8a0a0"/><rect x="11.7" y="39.8" width="1.3" height="1.3" fill="#fff"/><rect x="30.0" y="11.7" width="1.3" height="1.3" fill="#fff"/><rect x="2.0" y="6.9" width="2.3" height="2.3" fill="#d87888"/><rect x="12.9" y="12.7" width="1.0" height="1.0" fill="#4a5a38"/><rect x="26.3" y="42.8" width="2.2" height="2.2" fill="#f4e4e0"/><rect x="14.2" y="45.0" width="2.5" height="2.5" fill="#e8a0a0"/><rect x="5.3" y="0.0" width="1.1" height="1.1" fill="#fff"/><rect x="13.0" y="11.4" width="1.1" height="1.1" fill="#e8c8c0"/><rect x="3.4" y="29.4" width="2.3" height="2.3" fill="#e8a0a0"/><rect x="4.6" y="9.6" width="2.2" height="2.2" fill="#f4e4e0"/><rect x="20.7" y="19.9" width="2.2" height="2.2" fill="#f4e4e0"/><rect x="9.9" y="14.4" width="1.1" height="1.1" fill="#4a5a38"/><rect x="25.1" y="34.3" width="1.0" height="1.0" fill="#e8c8c0"/><rect x="14.0" y="43.8" width="1.2" height="1.2" fill="#4a5a38"/><rect x="14.5" y="10.8" width="1.2" height="1.2" fill="#e8a0a0"/><rect x="20.6" y="5.9" width="2.8" height="2.8" fill="#4a5a38"/><rect x="30.2" y="12.6" width="1.1" height="1.1" fill="#4a5a38"/><rect x="17.7" y="20.9" width="2.6" height="2.6" fill="#f4e4e0"/><rect x="31.1" y="14.2" width="2.9" height="2.9" fill="#e8a0a0"/><rect x="2.7" y="24.4" width="1.3" height="1.3" fill="#e8a0a0"/><rect x="26.9" y="9.7" width="1.3" height="1.3" fill="#d87888"/><rect x="6.1" y="18.7" width="2.2" height="2.2" fill="#2e3b28"/><rect x="29.0" y="30.3" width="2.4" height="2.4" fill="#4a5a38"/><rect x="26.9" y="25.7" width="1.9" height="1.9" fill="#f4e4e0"/><rect x="22.3" y="41.2" width="1.9" height="1.9" fill="#4a5a38"/><rect x="7.5" y="42.5" width="2.6" height="2.6" fill="#2e3b28"/><rect x="19.9" y="3.7" width="2.8" height="2.8" fill="#e8a0a0"/><rect x="1.1" y="5.4" width="2.2" height="2.2" fill="#e8a0a0"/><rect x="11.0" y="6.8" width="1.1" height="1.1" fill="#fff"/><rect x="4.4" y="30.9" width="1.1" height="1.1" fill="#fff"/><rect x="23.6" y="3.2" width="2.2" height="2.2" fill="#d87888"/><rect x="6.4" y="45.8" width="2.1" height="2.1" fill="#4a5a38"/><rect x="2.1" y="41.7" width="2.8" height="2.8" fill="#2e3b28"/><rect x="3.4" y="9.9" width="1.2" height="1.2" fill="#fff"/><rect x="30.4" y="43.7" width="2.5" height="2.5" fill="#fff"/><rect x="26.4" y="30.3" width="1.6" height="1.6" fill="#fff"/><rect x="4.2" y="38.0" width="2.3" height="2.3" fill="#d87888"/><rect x="10.2" y="20.3" width="1.0" height="1.0" fill="#d87888"/><rect x="29.8" y="2.3" width="2.5" height="2.5" fill="#d87888"/><rect x="24.6" y="28.9" width="2.0" height="2.0" fill="#d87888"/><rect x="19.8" y="1.5" width="1.8" height="1.8" fill="#2e3b28"/><rect x="16.6" y="4.7" width="1.9" height="1.9" fill="#fff"/><rect x="17.2" y="10.4" width="2.7" height="2.7" fill="#fff"/><rect x="18.4" y="13.8" width="1.9" height="1.9" fill="#f4e4e0"/><rect x="6.5" y="36.6" width="3.0" height="3.0" fill="#fff"/><rect x="11.1" y="4.6" width="2.4" height="2.4" fill="#e8c8c0"/><rect x="5.9" y="23.7" width="1.7" height="1.7" fill="#e8c8c0"/><rect x="16.5" y="27.7" width="1.3" height="1.3" fill="#e8c8c0"/><rect x="6.9" y="33.6" width="2.0" height="2.0" fill="#fff"/><rect x="30.0" y="36.8" width="2.0" height="2.0" fill="#4a5a38"/><rect x="18.0" y="5.0" width="1.7" height="1.7" fill="#fff"/><rect x="12.8" y="18.9" width="2.8" height="2.8" fill="#fff"/><rect x="13.5" y="31.0" width="1.7" height="1.7" fill="#d87888"/><rect x="8.4" y="43.3" width="2.0" height="2.0" fill="#2e3b28"/><rect x="31.4" y="30.3" width="2.9" height="2.9" fill="#e8a0a0"/><rect x="17.0" y="36.2" width="2.5" height="2.5" fill="#4a5a38"/><rect x="1.1" y="27.9" width="2.0" height="2.0" fill="#e8c8c0"/><rect x="27.0" y="31.8" width="2.5" height="2.5" fill="#e8a0a0"/><rect x="14.8" y="33.1" width="1.5" height="1.5" fill="#e8a0a0"/><rect x="4.0" y="22.2" width="2.8" height="2.8" fill="#e8a0a0"/><rect x="16.2" y="12.8" width="2.5" height="2.5" fill="#e8c8c0"/><rect x="27.0" y="7.4" width="1.3" height="1.3" fill="#e8a0a0"/><rect x="23.1" y="28.9" width="1.7" height="1.7" fill="#e8a0a0"/><rect x="10.5" y="9.1" width="3.0" height="3.0" fill="#4a5a38"/><rect x="31.8" y="7.9" width="2.3" height="2.3" fill="#e8a0a0"/><rect x="12.3" y="47.2" width="2.6" height="2.6" fill="#4a5a38"/><rect x="9.5" y="13.1" width="1.2" height="1.2" fill="#fff"/><rect x="9.0" y="42.5" width="1.9" height="1.9" fill="#fff"/><rect x="12.8" y="38.0" width="2.4" height="2.4" fill="#f4e4e0"/><rect x="31.4" y="14.2" width="1.0" height="1.0" fill="#d87888"/><rect x="19.3" y="19.4" width="2.5" height="2.5" fill="#e8c8c0"/><rect x="13.8" y="27.6" width="2.5" height="2.5" fill="#2e3b28"/><rect x="27.1" y="32.1" width="2.3" height="2.3" fill="#e8c8c0"/><rect x="20.5" y="28.0" width="1.5" height="1.5" fill="#e8a0a0"/><rect x="20.5" y="21.8" width="1.6" height="1.6" fill="#4a5a38"/><rect x="22.4" y="42.9" width="1.5" height="1.5" fill="#2e3b28"/><rect x="22.8" y="30.2" width="1.5" height="1.5" fill="#2e3b28"/><rect x="15.4" y="0.9" width="2.7" height="2.7" fill="#f4e4e0"/><rect x="21.6" y="44.6" width="1.4" height="1.4" fill="#4a5a38"/><rect x="10.5" y="0.5" width="2.7" height="2.7" fill="#fff"/><rect x="1.2" y="26.1" width="1.3" height="1.3" fill="#e8c8c0"/><rect x="30.4" y="9.6" width="1.7" height="1.7" fill="#e8c8c0"/><rect x="18.4" y="26.0" width="2.4" height="2.4" fill="#f4e4e0"/><rect x="0.5" y="38.0" width="1.7" height="1.7" fill="#d87888"/><rect x="13.1" y="45.5" width="1.4" height="1.4" fill="#4a5a38"/><rect x="5.9" y="24.7" width="2.9" height="2.9" fill="#4a5a38"/><rect x="31.5" y="17.1" width="1.1" height="1.1" fill="#d87888"/><rect x="12.2" y="3.0" width="1.2" height="1.2" fill="#2e3b28"/><rect x="20.1" y="32.4" width="2.2" height="2.2" fill="#fff"/><rect x="7.2" y="35.6" width="2.9" height="2.9" fill="#f4e4e0"/><rect x="31.1" y="47.7" width="2.9" height="2.9" fill="#2e3b28"/><rect x="6.8" y="6.2" width="2.6" height="2.6" fill="#e8c8c0"/><rect x="25.5" y="9.3" width="2.3" height="2.3" fill="#4a5a38"/><rect x="7.2" y="46.3" width="1.7" height="1.7" fill="#4a5a38"/><rect x="26.6" y="38.2" width="1.8" height="1.8" fill="#d87888"/><rect x="24.3" y="31.2" width="2.6" height="2.6" fill="#2e3b28"/><rect x="11.4" y="40.8" width="1.5" height="1.5" fill="#2e3b28"/><rect x="22.0" y="47.2" width="2.4" height="2.4" fill="#2e3b28"/><rect x="0.1" y="34.6" width="1.6" height="1.6" fill="#e8a0a0"/><rect x="20.9" y="15.4" width="2.0" height="2.0" fill="#f4e4e0"/><rect x="20.4" y="31.6" width="1.7" height="1.7" fill="#d87888"/><rect x="27.3" y="2.7" width="2.7" height="2.7" fill="#d87888"/><rect x="25.1" y="6.7" width="2.7" height="2.7" fill="#4a5a38"/><rect x="18.6" y="31.6" width="1.4" height="1.4" fill="#fff"/><path d="M22 14c6 2 10 10 10 20l-8 -6z" fill="#27301f"/></g></svg></div><div class="nm" style="letter-spacing:-0.16px">efvy63.jpg</div><div class="sz" style="letter-spacing:-0.5px">6.79 MB</div><div class="badge"><span style="left:8px">1</span><span style="left:26px">2</span></div></div>
</div>
<div id="scroll" class="abs"></div>
<div id="thumb" class="abs"></div>
<div id="leftbottom" class="abs"></div>
<div id="vline" class="abs"></div>
<div id="search" class="abs">Búsqueda</div>
<div id="sort" class="abs">Nombre</div>

<div id="rtool" class="abs"></div>
<div id="content" class="abs"></div>
<svg class="abs" style="left:321px;top:188px" width="292" height="194"><use href="#flower" width="292" height="194"/></svg>
<svg class="abs" style="left:657px;top:188px" width="292" height="194"><use href="#flower" width="292" height="194"/></svg>
<div class="lbl" style="left:340px;width:273px;letter-spacing:-.1px">UXHvTuh730Q - Copy.jpg</div>
<div class="lbl" style="left:676px;width:273px">wed55v.jpg</div>

<div id="menu" class="abs">
<div style="top:6px"><span class="sel">Seleccionar</span> <span style="letter-spacing:-0.225px">más reciente</span></div>
<div style="top:28px"><span class="sel">Seleccionar</span> <span style="letter-spacing:-0.08px">el más antiguo</span></div>
<div style="top:50px"><span class="sel">Seleccionar</span> <span style="letter-spacing:-0.027px">por nombre de archivo</span></div>
<div style="top:72px"><span class="sel">Seleccionar</span> <span style="letter-spacing:0.04px">por prioridad</span></div>
<div style="top:94px"><span class="sel">Seleccionar</span> <span style="letter-spacing:-0.105px">alta resolución</span></div>
<div style="top:116px"><span class="sel">Seleccionar</span> <span style="letter-spacing:-0.14px">baja resolución</span></div>
<div style="top:138px"><span class="sel">Seleccionar</span> <span style="letter-spacing:-0.167px">alta calidad</span></div>
<div style="top:160px"><span class="sel">Seleccionar</span> <span style="letter-spacing:-0.2px">baja calidad</span></div>
<div style="top:182px;letter-spacing:-.29px">Deseleccionar</div>
</div>


<!-- app icon -->
<svg class="abs" style="left:5px;top:2px" width="16" height="16" viewBox="0 0 16 16"><defs><clipPath id="ic"><rect width="16" height="15.6" rx="2.6"/></clipPath><linearGradient id="icg" x1="0" y1="0" x2="0" y2="1"><stop offset="0" stop-color="#a02838"/><stop offset=".1" stop-color="#d84a20"/><stop offset=".28" stop-color="#f88a18"/><stop offset=".55" stop-color="#ffc010"/><stop offset="1" stop-color="#ffdc10"/></linearGradient></defs><g clip-path="url(#ic)"><rect width="16" height="16" fill="#1c7ce4"/><circle cx="12" cy="3.7" r="1.9" fill="#dfe860"/><path d="M0 5.8C3 5.4 5.5 7 8.5 7.4S13 6.6 16 7V16H0z" fill="url(#icg)"/><ellipse cx="10" cy="9.6" rx="1.3" ry=".7" fill="#c42c08"/></g></svg>
<!-- window controls -->
<svg class="abs" style="left:846px;top:0" width="120" height="26" viewBox="0 0 120 26" fill="none" stroke="#111" stroke-width="1.1"><path d="M6 10.5h10"/><rect x="51.5" y="5.5" width="9" height="9"/><path d="M97 5l10 10M107 5l-10 10"/></svg>
<!-- select icon -->
<svg class="abs" style="left:319px;top:99px" width="19" height="14" viewBox="0 0 19 14" fill="none"><path d="M1 2.4h16M1 5.6h16" stroke="#6a6a6a" stroke-width="1.1"/><path d="M1 8.8h8M1 12.1h8" stroke="#8e8e8e" stroke-width="1.5"/><path d="M10.2 10.2l2.4 2.2l3.9 -3.4" stroke="#4a4a4a" stroke-width="1.2"/></svg>
<!-- slider -->
<div class="abs" style="left:515px;top:104px;width:126px;height:6px;border-radius:3px;background:#3d93f2"></div>
<div class="abs" style="left:635px;top:102px;width:10px;height:10px;border-radius:5px;background:#fff;border:1.5px solid #3d84d8"></div>
<!-- view toggle -->
<div class="abs" style="left:853px;top:95px;width:87px;height:24px;border-radius:5px;background:#fff;border:1px solid #d9d9d9"></div>
<div class="abs" style="left:853px;top:95px;width:29px;height:24px;border-radius:5px 0 0 5px;background:#6c6c6c"></div>
<svg class="abs" style="left:853px;top:95px" width="87" height="24" viewBox="0 0 87 24" fill="none"><g stroke="#fff" stroke-width="1.2"><rect x="10.6" y="7.6" width="3.3" height="3.3"/><rect x="16.6" y="7.6" width="3.3" height="3.3"/><rect x="10.6" y="13.2" width="3.3" height="3.3"/><rect x="16.6" y="13.2" width="3.3" height="3.3"/></g><g stroke="#777" stroke-width="1"><path d="M33.5 7v10M53.5 7v10" stroke="#aaa" stroke-width="1.4"/><path d="M36.5 7v10M50.5 7v10" stroke="#666" stroke-width="1.2"/><rect x="39.5" y="7.8" width="8" height="8.4" stroke="#666" stroke-width="1.2"/></g><g stroke="#666" stroke-width="1.1"><rect x="65.5" y="7.5" width="3.2" height="3.2"/><rect x="65.5" y="13.3" width="3.2" height="3.2"/><path d="M71 7.7h8.5M71 10.5h8.5M71 13.5h8.5M71 16.3h8.5"/></g></svg>
<!-- scrollbar arrows -->
<svg class="abs" style="left:282px;top:90px" width="12" height="12" viewBox="0 0 12 12" fill="none" stroke="#3e4246" stroke-width="1.9"><path d="M2.3 8L5.5 4.5L8.7 8"/></svg>
<svg class="abs" style="left:282px;top:606px" width="12" height="12" viewBox="0 0 12 12" fill="none" stroke="#3e4246" stroke-width="1.9"><path d="M2.3 3.6L5.5 7.1L8.7 3.6"/></svg>
<!-- dropdown chevron -->
<svg class="abs" style="left:268px;top:634px" width="18" height="12" viewBox="0 0 18 12" fill="none" stroke="#4586cc" stroke-width="1.7"><path d="M2.2 3.4l7 6.6l7 -6.6"/></svg>
<!-- checkboxes -->
<div class="abs" style="left:319px;top:432px;width:14px;height:14px;border-radius:2px;background:#3d98f6"></div>
<svg class="abs" style="left:319px;top:432px" width="14" height="14" viewBox="0 0 14 14" fill="none" stroke="#eafcff" stroke-width="1.7"><path d="M3.3 7.6L5.8 10L10.7 3.5"/></svg>
<div class="abs" style="left:655px;top:432px;width:14px;height:14px;border:1px solid #cfcfcf;background:#fff"></div>

<div id="footer" class="abs"></div>
<div id="ftxt" class="abs"><b>20</b><span style="left:20.2px">Archivos seleccionados.</span><b style="left:159.2px;letter-spacing:-.17px">31.73 MB</b><span style="left:217px;letter-spacing:.195px">Se liberará espacio de almacenamiento.</span></div>
<div id="borrar" class="abs">Borrar</div>
<div id="redge" class="abs"></div>
</body>
</html>
